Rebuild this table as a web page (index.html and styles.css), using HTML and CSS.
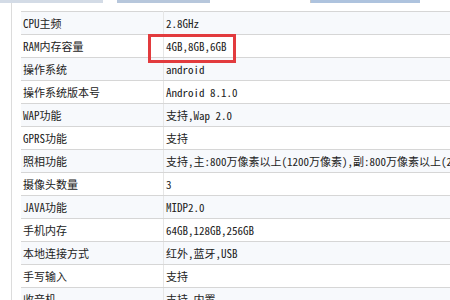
FILE: index.html
```html
<!DOCTYPE html>
<html lang="zh">
<head>
<meta charset="utf-8">
<link rel="stylesheet" href="styles.css">
</head>
<body>
<div class="tabs">
  <span class="tab t1"></span>
  <span class="tab t2"></span>
  <span class="tab t3"></span>
</div>
<div class="panel">
  <div class="wrap">
    <table class="spec">
      <tr class="odd"><td class="k">CPU主频</td><td class="v">2.8GHz</td></tr>
      <tr><td class="k">RAM内存容量</td><td class="v">4GB,8GB,6GB</td></tr>
      <tr class="odd"><td class="k">操作系统</td><td class="v">android</td></tr>
      <tr><td class="k">操作系统版本号</td><td class="v">Android 8.1.0</td></tr>
      <tr class="odd"><td class="k">WAP功能</td><td class="v">支持,Wap 2.0</td></tr>
      <tr><td class="k">GPRS功能</td><td class="v">支持</td></tr>
      <tr class="odd"><td class="k">照相功能</td><td class="v">支持,主:800万像素以上(1200万像素),副:800万像素以上(2000万像素)</td></tr>
      <tr><td class="k">摄像头数量</td><td class="v">3</td></tr>
      <tr class="odd"><td class="k">JAVA功能</td><td class="v">MIDP2.0</td></tr>
      <tr><td class="k">手机内存</td><td class="v">64GB,128GB,256GB</td></tr>
      <tr class="odd"><td class="k">本地连接方式</td><td class="v">红外,蓝牙,USB</td></tr>
      <tr><td class="k">手写输入</td><td class="v">支持</td></tr>
      <tr class="odd"><td class="k">收音机</td><td class="v">支持,内置</td></tr>
    </table>
    <div class="mark"></div>
  </div>
</div>
</body>
</html>
```
FILE: styles.css
```css
html, body {
  margin: 0;
  padding: 0;
  width: 450px;
  height: 300px;
  overflow: hidden;
  background: #ffffff;
}
body {
  font-family: "Noto Sans Mono CJK SC", "Noto Sans CJK SC", sans-serif;
  font-size: 11px;
  color: #222222;
}
.tabs {
  display: flex;
  height: 3px;
}
.tab {
  display: block;
  height: 3px;
}
.t1 {
  width: 103px;
  background: #d3dbe6;
}
.t2 {
  margin-left: 14px;
  width: 93px;
  background: #b7c7dc;
}
.t3 {
  margin-left: 100px;
  width: 110px;
  background: #aec3de;
  box-sizing: border-box;
  border-left: 1px solid #c9c9c9;
}
.panel {
  margin-left: 11px;
  border-left: 1px solid #dcdcdc;
  padding: 8px 0 0 9px;
  height: 300px;
}
.wrap {
  position: relative;
  width: 700px;
}
.spec {
  border-collapse: collapse;
  width: 700px;
  table-layout: fixed;
}
.spec td {
  height: 22px;
  padding: 0 2px;
  border-top: 1px solid #d6d6d6;
  border-bottom: 1px solid #d6d6d6;
  white-space: nowrap;
  overflow: hidden;
  line-height: 22px;
}
.spec .k {
  width: 138px;
  border-right: 1px solid #e6e6e6;
}
.spec tr.odd td {
  background: #f7f9fc;
}
.mark {
  position: absolute;
  left: 127px;
  top: 23px;
  width: 88px;
  height: 29px;
  box-sizing: border-box;
  border: 3px solid #e23b3e;
}
```
